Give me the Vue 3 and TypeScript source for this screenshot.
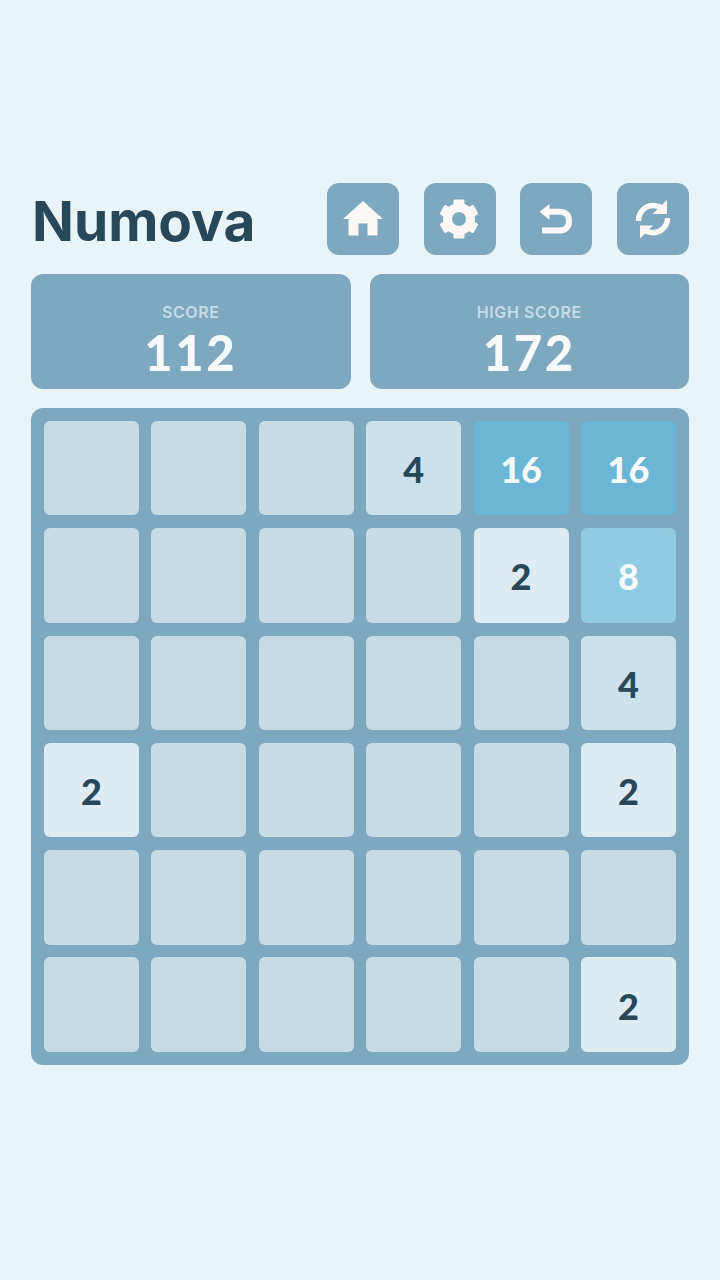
<script setup lang="ts">
const cells: number[] = [
  0, 0, 0, 4, 16, 16,
  0, 0, 0, 0, 2, 8,
  0, 0, 0, 0, 0, 4,
  2, 0, 0, 0, 0, 2,
  0, 0, 0, 0, 0, 0,
  0, 0, 0, 0, 0, 2
]
const gearTeeth = [0, 60, 120, 180, 240, 300]
</script>

<template>
  <div class="page">
    <div class="header">
      <h1 class="title">Numova</h1>
      <div class="buttons">
        <button class="icon-btn">
          <svg viewBox="0 0 40 40" width="40" height="40">
            <path d="M20 2 L40 20 H34.500 V36.500 H24.500 V24.500 H15.500 V36.500 H5.500 V20 H0 Z" fill="#fbf8f5" />
          </svg>
        </button>
        <button class="icon-btn">
          <svg viewBox="0 0 40 40" width="40" height="40">
            <g fill="#fbf8f5">
              <rect v-for="deg in gearTeeth" :key="deg" x="13.500" y="0.500" width="11" height="10" rx="1.500" :transform="`rotate(${deg} 19 20)`" />
              <path fill-rule="evenodd" d="M19 4 A16 16 0 1 0 19 36 A16 16 0 1 0 19 4 Z M19 13 A7 7 0 1 1 19 27 A7 7 0 1 1 19 13 Z" />
            </g>
          </svg>
        </button>
        <button class="icon-btn">
          <svg viewBox="0 0 40 40" width="40" height="40">
            <path d="M13.500 5 V21 L3.500 12.700 Z" fill="#fbf8f5" />
            <path d="M11 12.700 H24 C30 12.700 33 16.500 33 22 C33 27.500 30 31.500 24 31.500 H6" fill="none" stroke="#fbf8f5" stroke-width="6" />
          </svg>
        </button>
        <button class="icon-btn">
          <svg viewBox="0 0 40 40" width="40" height="40">
            <g fill="none" stroke="#fbf8f5" stroke-width="5.500">
              <path d="M5.500 22 C5.500 12 13 6.500 20 6.500 C24 6.500 27 7.500 30 10" />
              <path d="M34.500 19 C34.500 28 27 33.700 20 33.700 C16 33.700 13 32.500 10 30" />
            </g>
            <path d="M34 1 V15 H19.500 Z" fill="#fbf8f5" />
            <path d="M7 39.500 V26.500 H20 Z" fill="#fbf8f5" />
          </svg>
        </button>
      </div>
    </div>

    <div class="scores">
      <div class="score-card">
        <span class="score-label">SCORE</span>
        <span class="score-value">112</span>
      </div>
      <div class="score-card">
        <span class="score-label">HIGH SCORE</span>
        <span class="score-value">172</span>
      </div>
    </div>

    <div class="board">
      <div v-for="(value, i) in cells" :key="i" class="cell" :class="value ? `tile-${value}` : ''">
        {{ value || '' }}
      </div>
    </div>
  </div>
</template>

<style>
html, body {
  background: #e9f4f8;
}
</style>

<style scoped>
.page {
  box-sizing: border-box;
  width: 720px;
  height: 1280px;
  padding: 183px 31px 0;
  background: #e9f4f8;
  font-family: Inter, sans-serif;
}

.header {
  display: flex;
  justify-content: space-between;
  align-items: center;
  height: 72px;
}

.title {
  margin: 4px 0 0 1px;
  font-size: 55px;
  line-height: 66px;
  font-weight: 700;
  color: #27485a;
}

.buttons {
  display: flex;
  gap: 24.67px;
}

.icon-btn {
  display: flex;
  align-items: center;
  justify-content: center;
  width: 72px;
  height: 72px;
  padding: 0;
  border: none;
  border-radius: 12px;
  background: #7ea8bf;
}

.icon-btn svg {
  overflow: visible;
}

.scores {
  display: flex;
  gap: 19px;
  margin-top: 19px;
}

.score-card {
  flex: 1;
  height: 114.5px;
  display: flex;
  flex-direction: column;
  align-items: center;
  justify-content: center;
  gap: 4px;
  padding-top: 18px;
  box-sizing: border-box;
  border-radius: 12px;
  background: #7ea8bf;
}

.score-label {
  font-size: 16px;
  line-height: 20px;
  font-weight: 600;
  letter-spacing: 0.6px;
  color: #c5dbe8;
}

.score-value {
  font-family: Lato, sans-serif;
  font-size: 49px;
  line-height: 52px;
  font-weight: 900;
  letter-spacing: 2.5px;
  color: #f5fafc;
}

.board {
  display: grid;
  grid-template-columns: repeat(6, 95px);
  grid-auto-rows: 94.4px;
  gap: 12.9px 12.4px;
  margin-top: 19.5px;
  padding: 13px;
  border-radius: 12px;
  background: #7ea8bf;
}

.cell {
  display: flex;
  align-items: center;
  justify-content: center;
  padding-top: 2px;
  box-sizing: border-box;
  border-radius: 6px;
  background: #c7dbe7;
  font-family: Lato, sans-serif;
  font-size: 36px;
  font-weight: 900;
}

.tile-2 {
  background: #deebf3;
  color: #27485a;
}

.tile-4 {
  background: #cbe1eb;
  color: #27485a;
}

.tile-8 {
  background: #90cbe1;
  color: #f5fafc;
}

.tile-16 {
  background: #6cb6d5;
  color: #f5fafc;
}
</style>
